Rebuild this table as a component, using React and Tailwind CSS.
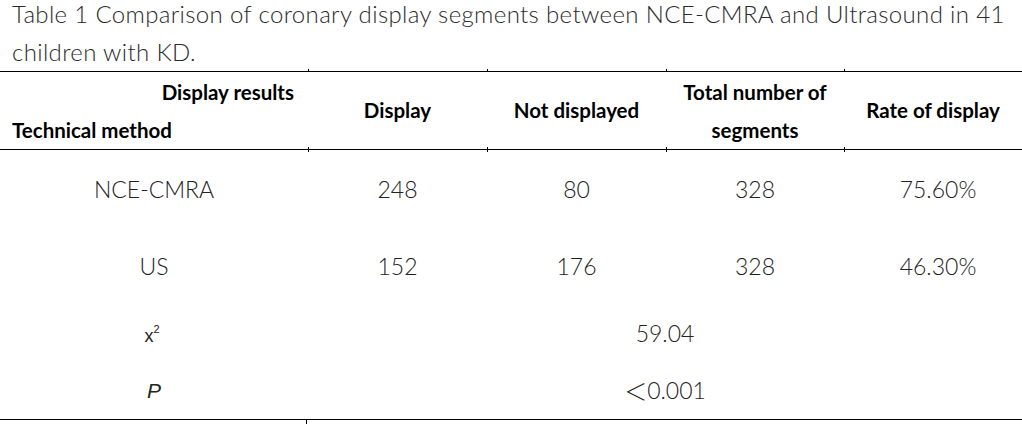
import React from "react";

const cols = "grid grid-cols-[308px_179px_179px_178px_178px]";
const body = "font-['Lato','Noto_Sans_CJK_SC',sans-serif] font-light text-[23px] text-[#222]";
const head = "font-['Lato',sans-serif] font-bold text-[20.5px] text-black";

function Rule({ below = true, above = true, ticks = [308, 487, 666, 844] }) {
  return (
    <div className="relative h-px bg-black">
      {ticks.map((x) => (
        <div
          key={x}
          className={`absolute w-px bg-black ${above ? "-top-[2px]" : "top-0"} ${below ? "h-[5px]" : "h-[3px]"}`}
          style={{ left: x }}
        />
      ))}
    </div>
  );
}

function Cell({ children, className = "" }) {
  return <div className={`flex items-center justify-center ${className}`}>{children}</div>;
}

export default function App() {
  return (
    <div className="w-[1022px] h-[426px] bg-white overflow-hidden">
      <div className="-mt-[5px] pl-[12px] font-['Lato',sans-serif] font-light text-[24px] tracking-[0.35px] leading-[38px] text-[#2a2a2a]">
        <div className="whitespace-nowrap">Table 1 Comparison of coronary display segments between NCE-CMRA and Ultrasound in 41</div>
        <div>children with KD.</div>
      </div>
      <Rule below={false} />
      <div className={`${cols} h-[77px] ${head}`}>
        <div className="flex flex-col pl-[12px] pr-[14px] pt-[7px]">
          <div className="text-right leading-[26px]">Display results</div>
          <div className="leading-[26px] mt-[12px]">Technical method</div>
        </div>
        <Cell>Display</Cell>
        <Cell>Not displayed</Cell>
        <Cell className="flex-col leading-[38px]">
          <div>Total number of</div>
          <div>segments</div>
        </Cell>
        <Cell>Rate of display</Cell>
      </div>
      <Rule />
      <div className={`${cols} h-[78px] ${body}`}>
        <Cell>NCE-CMRA</Cell>
        <Cell>248</Cell>
        <Cell>80</Cell>
        <Cell>328</Cell>
        <Cell className="pl-[10px]">75.60%</Cell>
      </div>
      <div className={`${cols} h-[76px] ${body}`}>
        <Cell>US</Cell>
        <Cell>152</Cell>
        <Cell>176</Cell>
        <Cell>328</Cell>
        <Cell className="pl-[10px]">46.30%</Cell>
      </div>
      <div className={`${cols} h-[58px] ${body}`}>
        <Cell>
          <span className="font-['Liberation_Sans',sans-serif] font-normal text-[18px] leading-none pt-[6px] -ml-[4px]">
            x<span className="text-[11px] relative -top-[9px]">2</span>
          </span>
        </Cell>
        <Cell className="col-span-4">59.04</Cell>
      </div>
      <div className={`${cols} h-[57px] ${body}`}>
        <Cell>
          <span className="font-['Liberation_Sans',sans-serif] font-normal italic text-[21px]">P</span>
        </Cell>
        <Cell className="col-span-4">
          <span className="font-['Noto_Sans_CJK_SC',sans-serif] font-light">＜</span>0.001
        </Cell>
      </div>
      <Rule above={false} ticks={[306]} />
    </div>
  );
}
